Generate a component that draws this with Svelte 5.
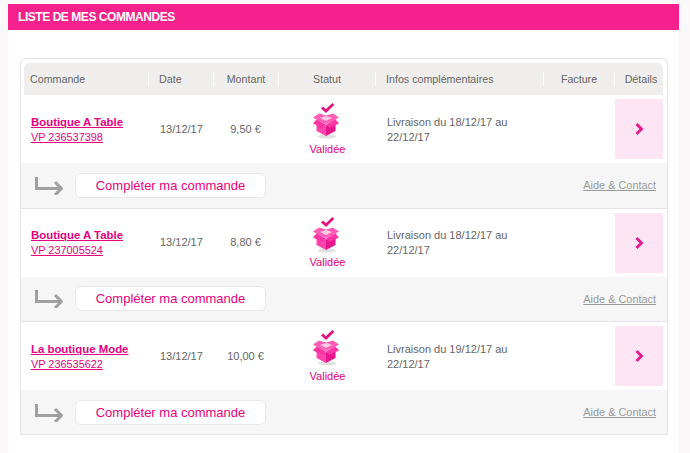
<script>
	const orders = [
		{ shop: 'Boutique A Table', ref: 'VP 236537398', date: '13/12/17', amount: '9,50 €', info: 'Livraison du 18/12/17 au 22/12/17' },
		{ shop: 'Boutique A Table', ref: 'VP 237005524', date: '13/12/17', amount: '8,80 €', info: 'Livraison du 18/12/17 au 22/12/17' },
		{ shop: 'La boutique Mode', ref: 'VP 236535622', date: '13/12/17', amount: '10,00 €', info: 'Livraison du 19/12/17 au 22/12/17' }
	];
</script>

<div class="page">
	<div class="panel">
		<h1>LISTE DE MES COMMANDES</h1>
		<div class="box">
			<div class="head">
				<span class="left">Commande</span>
				<span class="sep left">Date</span>
				<span class="sep">Montant</span>
				<span class="sep">Statut</span>
				<span class="sep left">Infos complémentaires</span>
				<span class="sep">Facture</span>
				<span class="sep details">Détails</span>
			</div>
			{#each orders as order}
				<div class="order">
					<div class="row">
						<div class="names">
							<a href="#top" class="shop">{order.shop}</a>
							<a href="#top" class="ref">{order.ref}</a>
						</div>
						<div class="cell date">{order.date}</div>
						<div class="cell amount">{order.amount}</div>
						<div class="status">
							<svg width="28" height="36" viewBox="0 0 28 36">
								<ellipse cx="14" cy="33.500" rx="9" ry="2" fill="#bbb" opacity="0.45" />
								<path d="M9 4.500l4 3.500 7.300-7" fill="none" stroke="#e0127f" stroke-width="2.800" />
								<path d="M0 14.500L6 10.500 13 12.500 20 10.500 26 14.500 20 18 13 21 6 18z" fill="#ff5cb6" />
								<path d="M7 15l6-2 6 2-6 3z" fill="#fdcbe6" />
								<path d="M3.500 18l9.500 4.500V33L3.500 28z" fill="#ff45ab" />
								<path d="M22.500 18L13 22.500V33l9.500-5z" fill="#e8158c" />
								<path d="M0 20.500l3.500-4L13 21.500l-3.500 3.500zM26 20.500l-3.500-4L13 21.500l3.500 3.500z" fill="#fb35a4" />
							</svg>
							<span>Validée</span>
						</div>
						<div class="cell info">{order.info}</div>
						<div></div>
						<a href="#top" class="detail" aria-label="Détails">
							<svg width="9" height="12" viewBox="0 0 9 12">
								<path d="M1.500 1l5 5-5 5" fill="none" stroke="#e6198c" stroke-width="2.800" />
							</svg>
						</a>
					</div>
					<div class="foot">
						<svg class="arrow" width="29" height="18" viewBox="0 0 29 18">
							<path d="M2.500 0v11.500h24M21 5l6.500 6.500L21 18" fill="none" stroke="#a0a0a0" stroke-width="3" />
						</svg>
						<button>Compléter ma commande</button>
						<a href="#top" class="help">Aide &amp; Contact</a>
					</div>
				</div>
			{/each}
		</div>
	</div>
</div>

<style>
	:global(body) {
		margin: 0;
		background: #fff;
	}

	.page {
		width: 690px;
		height: 453px;
		padding-top: 4px;
		box-sizing: border-box;
		overflow: hidden;
		background: #faf8f9;
		font-family: "Liberation Sans", Arial, sans-serif;
	}

	.panel {
		margin-left: 8px;
		width: 671px;
		height: 449px;
		box-sizing: border-box;
		background: #fff;
	}

	h1 {
		margin: 0;
		height: 26px;
		padding-left: 10px;
		background: #f5218c;
		color: #fff;
		font-size: 12px;
		font-weight: bold;
		line-height: 26px;
		letter-spacing: -0.45px;
	}

	.box {
		margin: 28px 0 0 12px;
		width: 648px;
		box-sizing: border-box;
		border: 1px solid #e4e4e4;
		border-radius: 6px 6px 0 0;
		padding-top: 4px;
	}

	.head,
	.row {
		display: grid;
		grid-template-columns: 124px 65px 65px 97px 168px 71px 49px;
		margin: 0 4px 0 3px;
	}

	.head {
		height: 32px;
		align-items: center;
		background: #efeeec;
		border-radius: 5px 5px 0 0;
		color: #666;
		font-size: 10.700px;
		text-align: center;
	}

	.head span {
		line-height: 14px;
	}

	.head .left {
		text-align: left;
		padding-left: 6px;
	}

	.head .sep {
		border-left: 1px solid #fff;
	}

	.head .sep.left {
		padding-left: 10px;
	}

	.head .details {
		padding-left: 4px;
	}

	.row {
		height: 68px;
		align-items: center;
		color: #666;
		font-size: 11px;
	}

	.names {
		display: flex;
		flex-direction: column;
		gap: 2px;
		padding: 1.500px 0 0 7px;
		line-height: 13px;
	}

	.shop {
		align-self: flex-start;
		color: #e6007e;
		font-weight: bold;
		font-size: 11.400px;
	}

	.ref {
		align-self: flex-start;
		color: #e6007e;
		font-size: 10.900px;
	}

	.cell {
		line-height: 13px;
	}

	.date {
		padding-left: 12px;
	}

	.amount {
		text-align: center;
	}

	.status {
		display: flex;
		flex-direction: column;
		align-items: center;
		align-self: start;
		padding-top: 8px;
		color: #e6007e;
		font-size: 11px;
		line-height: 13px;
	}

	.status svg {
		display: block;
		margin-bottom: -2px;
		margin-left: 1px;
	}

	.status span {
		margin: 5.500px 0 0 2px;
	}

	.info {
		padding: 1.500px 20px 0 12px;
		line-height: 15px;
	}

	.detail {
		display: flex;
		align-items: center;
		justify-content: center;
		height: 60px;
		margin-left: 1px;
		background: #fee5f4;
	}

	.foot {
		display: flex;
		align-items: center;
		height: 45.500px;
		padding: 0 11px 0 13px;
		box-sizing: border-box;
		background: #f6f6f6;
		border-bottom: 1px solid #e4e4e4;
	}

	.order:last-child .foot {
		height: 44px;
		border-bottom: none;
	}

	.arrow {
		flex: none;
		margin-top: 1px;
	}

	button {
		width: 191px;
		height: 25px;
		margin-left: 12px;
		padding: 0;
		border: 1px solid #e9e9e9;
		border-radius: 6px;
		background: #fff;
		color: #e6007e;
		font-family: inherit;
		font-size: 13px;
	}

	.help {
		margin-left: auto;
		color: #999;
		font-size: 10.900px;
	}
</style>
